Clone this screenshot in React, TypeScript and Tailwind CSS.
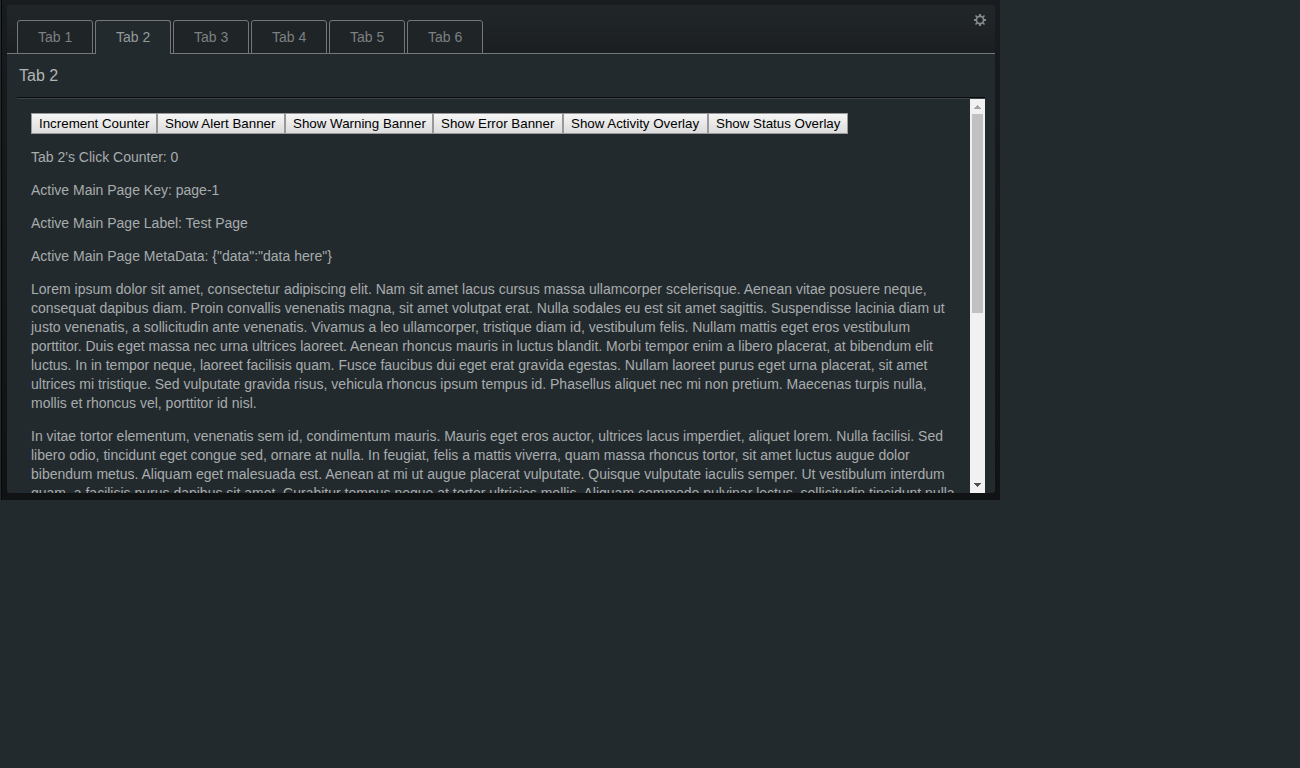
const tabs = [1, 2, 3, 4, 5, 6];

const actions = [
  { label: "Increment Counter", width: "w-[126px]" },
  { label: "Show Alert Banner", width: "w-[128px]" },
  { label: "Show Warning Banner", width: "w-[148px]" },
  { label: "Show Error Banner", width: "w-[130px]" },
  { label: "Show Activity Overlay", width: "w-[145px]" },
  { label: "Show Status Overlay", width: "w-[140px]" },
];

const facts = [
  "Tab 2's Click Counter: 0",
  "Active Main Page Key: page-1",
  "Active Main Page Label: Test Page",
  'Active Main Page MetaData: {"data":"data here"}',
];

const paragraphs = [
  [
    "Lorem ipsum dolor sit amet, consectetur adipiscing elit. Nam sit amet lacus cursus massa ullamcorper scelerisque. Aenean vitae posuere neque,",
    "consequat dapibus diam. Proin convallis venenatis magna, sit amet volutpat erat. Nulla sodales eu est sit amet sagittis. Suspendisse lacinia diam ut",
    "justo venenatis, a sollicitudin ante venenatis. Vivamus a leo ullamcorper, tristique diam id, vestibulum felis. Nullam mattis eget eros vestibulum",
    "porttitor. Duis eget massa nec urna ultrices laoreet. Aenean rhoncus mauris in luctus blandit. Morbi tempor enim a libero placerat, at bibendum elit",
    "luctus. In in tempor neque, laoreet facilisis quam. Fusce faucibus dui eget erat gravida egestas. Nullam laoreet purus eget urna placerat, sit amet",
    "ultrices mi tristique. Sed vulputate gravida risus, vehicula rhoncus ipsum tempus id. Phasellus aliquet nec mi non pretium. Maecenas turpis nulla,",
    "mollis et rhoncus vel, porttitor id nisl.",
  ],
  [
    "In vitae tortor elementum, venenatis sem id, condimentum mauris. Mauris eget eros auctor, ultrices lacus imperdiet, aliquet lorem. Nulla facilisi. Sed",
    "libero odio, tincidunt eget congue sed, ornare at nulla. In feugiat, felis a mattis viverra, quam massa rhoncus tortor, sit amet luctus augue dolor",
    "bibendum metus. Aliquam eget malesuada est. Aenean at mi ut augue placerat vulputate. Quisque vulputate iaculis semper. Ut vestibulum interdum",
    "quam, a facilisis purus dapibus sit amet. Curabitur tempus neque at tortor ultricies mollis. Aliquam commodo pulvinar lectus, sollicitudin tincidunt nulla",
  ],
];

function Gear() {
  return (
    <svg className="mt-[9px] mr-[9px] size-3 shrink-0" viewBox="0 0 12 12" fill="none" stroke="#85898b">
      <circle cx="6" cy="6" r="3.6" strokeWidth="1.7" />
      <path d="M6 0v2M6 10v2M0 6h2M10 6h2" strokeWidth="2" />
      <path d="M1.5 1.5l2 2M8.5 8.5l2 2M1.5 10.5l2-2M8.5 3.5l2-2" strokeWidth="1.6" />
    </svg>
  );
}

function TabBar() {
  return (
    <header className="flex h-[49px] shrink-0 items-start justify-between rounded-t-[3px] bg-linear-to-b from-[#212729] to-[#1b1e20] shadow-[inset_0_-1px_0_#74787a]">
      <nav className="mt-[15px] ml-[10px] flex gap-[2px]">
        {tabs.map((n) => (
          <button
            key={n}
            className={
              n === 2
                ? "flex h-[34px] w-[76px] items-start rounded-t-[3px] border border-b-0 border-[#74787a] bg-[#232a2d] pt-[7px] pl-5 text-[14px] leading-[19px] whitespace-nowrap text-[#949a9c]"
                : "flex h-[34px] w-[76px] items-start rounded-t-[3px] border border-[#74787a] bg-[#1f2427] pt-[7px] pl-5 text-[14px] leading-[19px] whitespace-nowrap text-[#7c8082]"
            }
          >
            {`Tab ${n}`}
          </button>
        ))}
      </nav>
      <Gear />
    </header>
  );
}

function Scrollbar() {
  return (
    <div className="flex w-[15px] shrink-0 flex-col items-center bg-[#f1f1f1]">
      <svg className="h-[15px] w-[15px]" viewBox="0 0 15 15" shapeRendering="crispEdges">
        <path d="M7 6h1v1h1v1h1v1h1v1H4V9h1V8h1V7h1z" fill="#a3a3a3" />
      </svg>
      <div className="h-[199px] w-[11px] bg-[#c1c1c1]" />
      <svg className="mt-auto h-[15px] w-[15px]" viewBox="0 0 15 15" shapeRendering="crispEdges">
        <path d="M4 5h7v1h-1v1H9v1H8v1H7V8H6V7H5V6H4z" fill="#505050" />
      </svg>
    </div>
  );
}

export default function App() {
  return (
    <div className="h-screen w-screen overflow-hidden bg-[#232a2d] pl-px font-['Liberation_Sans',Arial,sans-serif]">
      <div className="h-[500px] w-[999px] border-l border-[#050708] bg-linear-to-b from-[#191c1e] to-[#101213] pt-[5px] pr-[5px] pb-[7px] pl-[5px]">
        <main className="flex h-[488px] flex-col overflow-hidden rounded-[3px] bg-[#232a2d]">
          <TabBar />
          <section className="flex min-h-0 flex-1 flex-col px-[10px]">
            <h1 className="h-[43px] shrink-0 pt-[10px] pl-[2px] text-[16px] leading-[23px] text-[#b0b5b6]">Tab 2</h1>
            <div className="h-[2px] shrink-0 border-t border-b border-t-[#080a0b] border-b-[#3d4346]" />
            <div className="flex min-h-0 flex-1">
              <div className="min-w-0 flex-1 overflow-hidden pt-[14px] pl-[14px] text-[14px] leading-[19px] text-[#a7acad]">
                <div className="mb-[14px] flex h-[21px]">
                  {actions.map((a) => (
                    <button
                      key={a.label}
                      className={`${a.width} shrink-0 border border-[#999] bg-linear-to-b from-[#f6f6f6] to-[#dcdcdc] pl-[7px] text-left text-[13.333px] leading-[19px] whitespace-nowrap text-black`}
                    >
                      {a.label}
                    </button>
                  ))}
                </div>
                {facts.map((f) => (
                  <p key={f} className="mb-[14px]">
                    {f}
                  </p>
                ))}
                {paragraphs.map((lines) => (
                  <p key={lines[0]} className="mb-[14px]">
                    {lines.map((line) => (
                      <span key={line} className="block whitespace-nowrap">
                        {line}
                      </span>
                    ))}
                  </p>
                ))}
              </div>
              <Scrollbar />
            </div>
          </section>
        </main>
      </div>
    </div>
  );
}
